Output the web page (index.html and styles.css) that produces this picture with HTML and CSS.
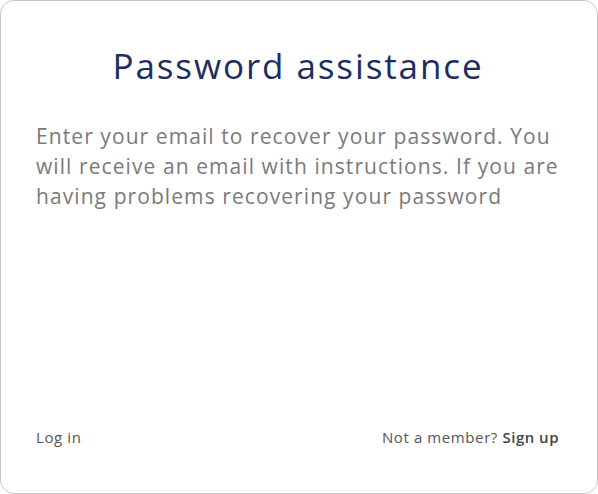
FILE: index.html
```html
<!DOCTYPE html>
<html>
<head>
<meta charset="utf-8">
<link rel="stylesheet" href="styles.css">
</head>
<body>
<div class="card">
  <h1 class="title">Password assistance</h1>
  <p class="text">Enter your email to recover your password. You will receive an email with instructions. If you are having problems recovering your password</p>
  <div class="footer">
    <span class="link">Log in</span>
    <span class="signup">Not a member? <b>Sign up</b></span>
  </div>
</div>
</body>
</html>
```
FILE: styles.css
```css
html, body { margin: 0; padding: 0; background: #fff; }
body { font-family: "Open Sans", sans-serif; }
.card {
  box-sizing: border-box;
  width: 598px;
  height: 494px;
  border: 1px solid #c8c8c8;
  border-radius: 14px;
  padding: 0 37px 0 35px;
  display: flex;
  flex-direction: column;
}
.title {
  margin: 40px 0 0;
  text-align: center;
  font-size: 35px;
  font-weight: 500;
  letter-spacing: 1.9px;
  line-height: 50px;
  color: #1e2d5f;
}
.text {
  margin: 30px 0 0;
  font-size: 21px;
  letter-spacing: 1.08px;
  line-height: 30px;
  color: #7a7a7a;
  flex: 1;
}
.footer {
  display: flex;
  justify-content: space-between;
  font-size: 15px;
  letter-spacing: 0.6px;
  line-height: 20px;
  color: #555;
  margin: 0 1px 46px 0;
}
.signup b { font-weight: 600; color: #444; letter-spacing: 0.5px; }
```
